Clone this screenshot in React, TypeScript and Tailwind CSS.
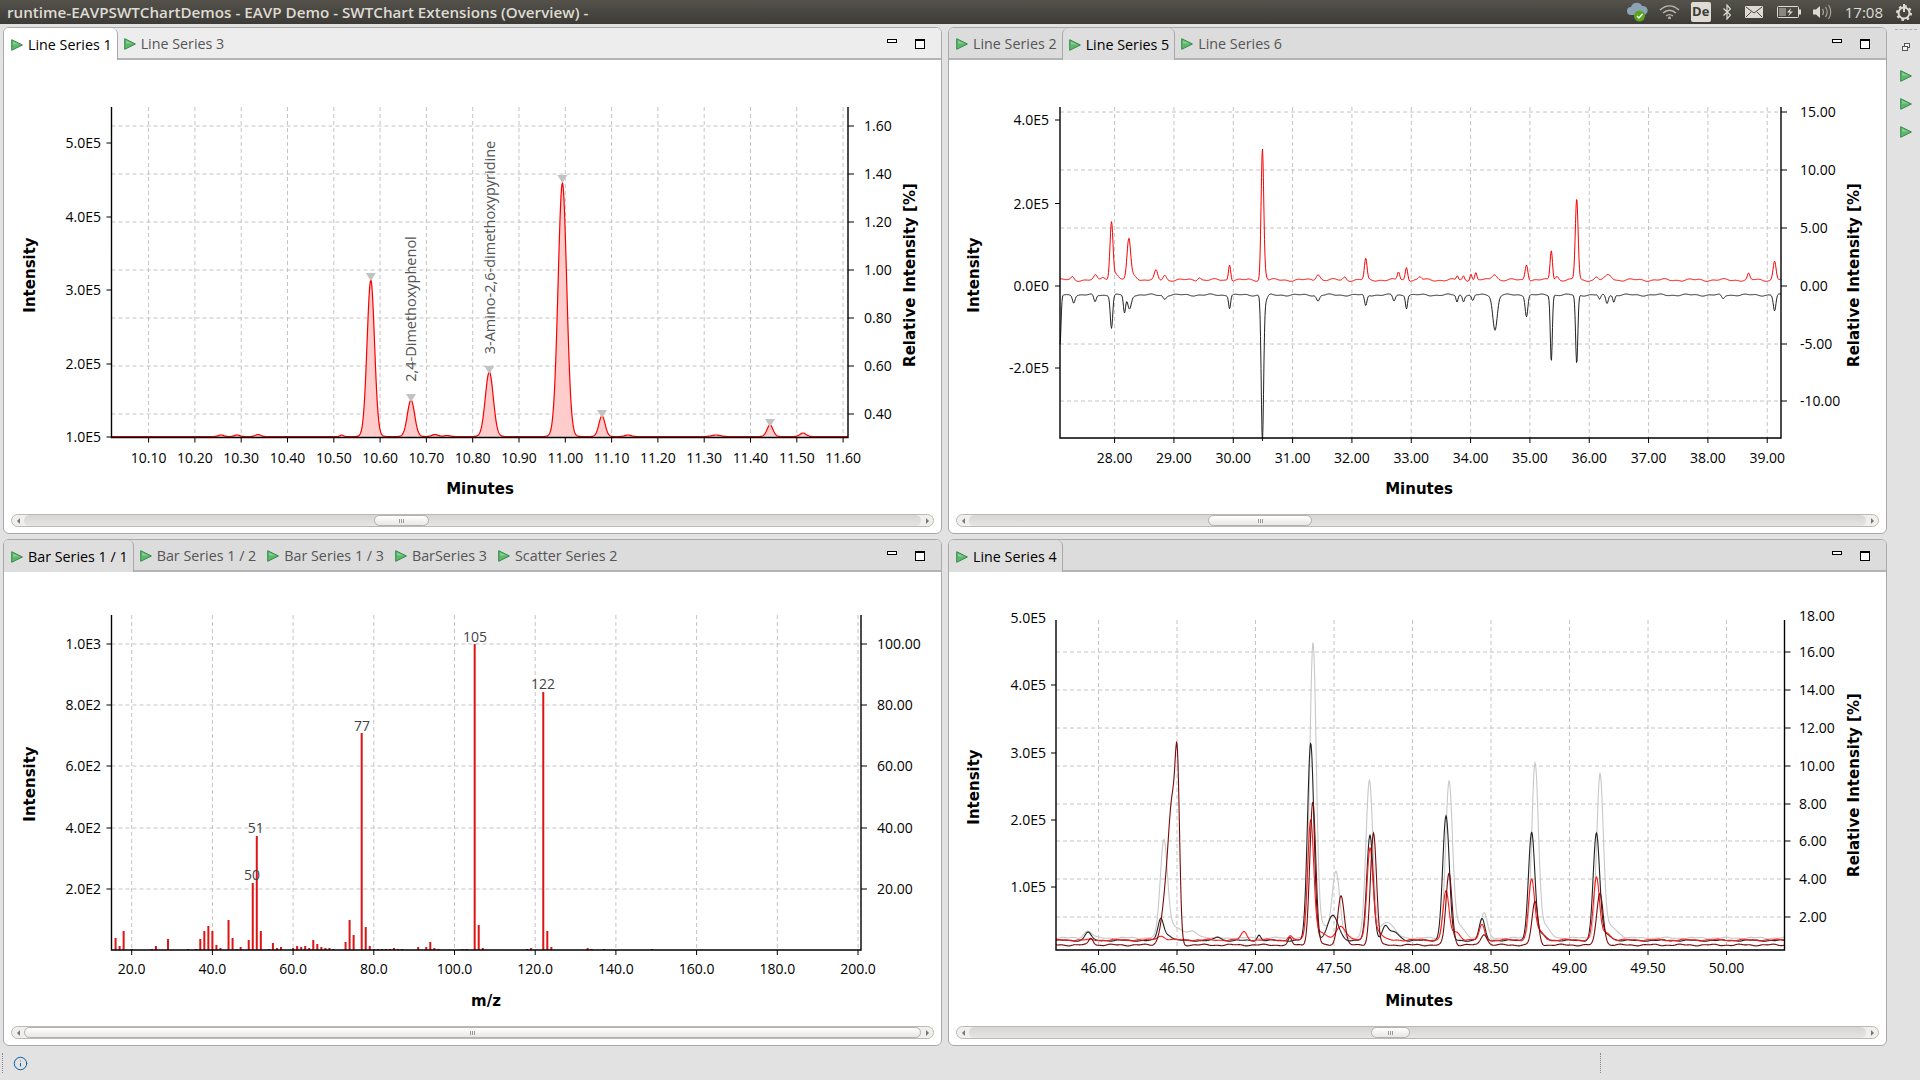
import type { ReactNode } from 'react';
import { Info } from 'lucide-react';

type Peak = [number, number, number];
type Tick = [number, string];

// x, y of the top of the peak, sigma - everything is in screen pixels
const trace = (x0: number, x1: number, base: number, peaks: Peak[], ripple = 0, phase = 0) => {
  const pts: string[] = [];
  for (let x = x0; x <= x1; x += 0.5) {
    let y = base;
    for (const [c, top, s] of peaks) {
      y -= (base - top) * Math.exp(-((x - c) * (x - c)) / (2 * s * s));
    }
    y += ripple * (Math.sin(x * 0.21 + phase) + 0.6 * Math.sin(x * 0.53 + phase * 2));
    pts.push(`${x},${y.toFixed(1)}`);
  }
  return pts;
};

const linePath = (pts: string[]) => 'M' + pts.join(' L');

const chart1Peaks: Peak[] = [
  [221, 435, 2.5], [237, 435, 2.5], [258, 434.5, 2.5], [341.7, 435, 1.5], [370.8, 280, 3.7], [411, 400, 3.6], [435, 434.5, 3],
  [447, 435.5, 3], [489.3, 372, 4], [562.4, 183, 4.3], [602, 416, 3.1], [628, 435, 3], [716, 435, 4], [770, 425, 3], [803, 433, 3],
];

const chart2Red: Peak[] = [
  [1072.5, 277, 1.5], [1095.4, 276, 1.6], [1103, 277, 2], [1111.5, 221, 1.5], [1116, 274, 2], [1128.8, 240, 1.8], [1134, 275, 3], [1156, 271, 1.6], [1164.7, 275, 1.6],
  [1199.3, 277, 1.6], [1229.6, 264, 1.1], [1262.4, 150, 1.3], [1265, 274, 1.5], [1318, 274, 2], [1344.7, 277, 1.5], [1365.7, 259, 1.3], [1398.5, 272, 1.2], [1406.5, 267, 1.2],
  [1420, 277, 1.5], [1457.3, 276, 1], [1463.5, 276, 1], [1470.9, 273, 1], [1475.8, 273, 1], [1494.4, 274, 2.5], [1526.5, 264, 1.4], [1551.3, 250, 1.2], [1556.9, 276, 1.5],
  [1576.7, 199, 1.4], [1596.5, 277, 1.5], [1608.8, 275, 3], [1748.6, 274, 1.2], [1774.6, 261, 1.5],
];

const chart2Black: Peak[] = [
  [1060, 345, 1], [1073.7, 302, 1.2], [1095, 302, 1.2], [1111.5, 328, 1.2], [1124.5, 313, 1.1], [1129.4, 309, 1.8], [1164.7, 299, 1.5], [1229.6, 308, 1],
  [1262.4, 438, 1.2], [1265, 302, 2], [1318, 301, 1.5], [1365.7, 306, 1.2], [1394, 301, 1.2], [1406.5, 308, 1], [1457, 302, 1], [1463.5, 301, 1], [1472.7, 301, 1.2],
  [1495, 330, 2.2], [1526.5, 316, 1.3], [1551.3, 361, 1], [1576.7, 364, 1.1], [1599.6, 300, 1.2], [1607, 303, 1.2], [1613.8, 302, 1], [1723, 299, 1.5], [1774.6, 311, 1.3],
];

const chart4Gray: Peak[] = [
  [1088, 931, 4], [1163.8, 847, 3.5], [1172, 925, 8], [1193, 932, 6], [1313, 647, 3.2], [1322, 925, 6], [1336, 873, 3.8], [1369.4, 782, 3.5], [1386.7, 922, 7],
  [1449, 785, 3.4], [1458, 925, 6], [1484, 913, 3.2], [1535, 768, 3.3], [1543, 925, 6], [1600, 778, 3.3], [1610, 926, 7],
];
const chart4Black: Peak[] = [
  [1088, 932, 3], [1160.7, 919, 2.8], [1168, 935, 4], [1218, 937, 3], [1259, 935, 1.8], [1310.7, 743, 3.2], [1333, 916, 5.5], [1370, 835, 3.2], [1385, 927, 3],
  [1394, 932, 5], [1446, 816, 3.3], [1482, 919, 2.8], [1531.6, 834, 3.2], [1540, 934, 5], [1596.4, 834, 3.2], [1606, 934, 5],
];
const chart4Red: Peak[] = [
  [1161, 936, 4], [1244, 932, 3], [1290, 936, 2], [1310.7, 820, 3], [1320, 932, 5], [1341, 926, 5], [1370, 848, 3], [1378, 932, 4], [1446, 892, 3], [1456, 932, 4],
  [1482, 925, 2.6], [1531.6, 880, 3], [1540, 932, 4], [1596.4, 878, 3], [1606, 932, 4],
];
const chart4DarkRed: Peak[] = [
  [1091, 938, 2.2], [1168, 880, 5], [1173, 845, 3.5], [1177.5, 805, 2.2], [1290, 938, 1.8], [1312.8, 802, 3], [1341, 895, 3.2], [1373.5, 833, 3], [1449, 873, 3],
  [1484, 934, 3], [1535, 902, 3], [1600, 893, 3.2],
];

// [m/z, top of the bar on screen]
const bars: [number, number][] = [
  [16, 938], [17, 946], [18, 931], [20, 949], [25, 949], [26, 946], [29, 939], [34, 949], [36, 949], [37, 939], [38, 931], [39, 926], [40, 931], [41, 945], [42, 948],
  [44, 920], [45, 938], [46, 949], [47, 947], [49, 940], [50, 883], [51, 836], [52, 931], [54, 949], [55, 943], [56, 948], [57, 947], [60, 948], [61, 946], [62, 947],
  [63, 946], [64, 948], [65, 940], [66, 944], [67, 947], [68, 948], [69, 948], [70, 949], [73, 942], [74, 920], [75, 935], [77, 733], [78, 927], [79, 946], [80, 949],
  [81, 949], [82, 949], [83, 949], [84, 949], [85, 948], [86, 949], [87, 949], [91, 947], [93, 947], [94, 942], [95, 948], [96, 949], [102, 949], [103, 949], [105, 644],
  [106, 925], [107, 948], [118, 949], [119, 948], [122, 692], [123, 931], [124, 947], [133, 948], [134, 949], [137, 949], [149, 949],
];

function PlayIcon() {
  return (
    <svg width="12" height="12" viewBox="0 0 12 12" className="shrink-0">
      <polygon points="0.7,0.7 11.4,6 0.7,11.3" fill="#5fb66d" stroke="#35894c" strokeWidth="1" />
      <polygon points="2,2.6 8.4,5.6 2,5.6" fill="#86cf8e" />
    </svg>
  );
}

function Tab({ label, active, focused, first }: { label: string; active?: boolean; focused?: boolean; first?: boolean }) {
  let cls = 'text-[#555]';
  if (active) {
    cls = `text-black border-r border-[#a9a9a9] rounded-tr-[6px] h-[32px] ${first ? '' : 'border-l rounded-tl-[6px]'} ${focused ? 'bg-white' : 'bg-[#dedede]'}`;
  }
  return (
    <div className={`flex items-center gap-[5px] pt-[2px] ${first ? 'pl-[7px]' : 'pl-[6px]'} pr-[5px] ${cls}`}>
      <PlayIcon />
      <span className="text-[14.3px] whitespace-nowrap">{label}</span>
    </div>
  );
}

function Scrollbar({ thumb }: { thumb: string }) {
  return (
    <div className="mx-[7px] mb-[6px] flex h-[13px] shrink-0 rounded-full border border-[#bcb9b4] bg-[#f0efed]">
      <div className="flex w-[12px] shrink-0 items-center justify-center">
        <div className="h-0 w-0 border-y-[3px] border-r-[3px] border-y-transparent border-r-[#777]" />
      </div>
      <div className="flex min-w-0 flex-1 rounded-full bg-gradient-to-b from-[#d6d5d2] to-[#e6e5e3]">
        <div className={`flex items-center justify-center gap-[1px] rounded-full border border-[#b5b2ad] bg-gradient-to-b from-white to-[#e8e7e5] ${thumb}`}>
          <div className="h-[4px] w-px bg-[#999]" />
          <div className="h-[4px] w-px bg-[#999]" />
          <div className="h-[4px] w-px bg-[#999]" />
        </div>
      </div>
      <div className="flex w-[12px] shrink-0 items-center justify-center">
        <div className="h-0 w-0 border-y-[3px] border-l-[3px] border-y-transparent border-l-[#777]" />
      </div>
    </div>
  );
}

function Panel({ tabs, activeTab, focused, thumb, children }: { tabs: string[]; activeTab: number; focused?: boolean; thumb: string; children: ReactNode }) {
  return (
    <div className="flex min-h-0 min-w-0 flex-col overflow-hidden rounded-[6px] border border-[#a9a9a9] bg-white">
      <div className={`flex h-[32px] shrink-0 border-b-2 border-[#b4b4b4] ${focused ? 'bg-[#ededed]' : 'bg-[#dcdcdc]'}`}>
        {tabs.map((t, i) => (
          <Tab key={t} label={t} active={i === activeTab} focused={focused} first={i === 0} />
        ))}
        <div className="ml-auto flex items-start gap-[18px] pt-[11px] pr-[16px]">
          <div className="h-[4px] w-[10px] border border-black bg-white" />
          <div className="h-[10px] w-[10px] border border-t-2 border-black bg-white" />
        </div>
      </div>
      {children}
      <Scrollbar thumb={thumb} />
    </div>
  );
}

interface ChartProps {
  view: string;
  l: number;
  r: number;
  t: number;
  b: number;
  xTicks: Tick[];
  leftTicks: Tick[];
  rightTicks: Tick[];
  grid: number[];
  leftLabelEnd: number;
  rightLabelStart: number;
  xTitle: [string, number, number];
  yTitleX: number;
  yTitleY: number;
  rightTitle?: [number, number];
  xLabelY: number;
  children?: ReactNode;
}

function Chart(p: ChartProps) {
  const title = "fill-black text-[15px] font-bold font-['DejaVu_Sans',sans-serif]";
  return (
    <svg viewBox={p.view} className="block h-[454px] w-[937px] shrink-0">
      {p.xTicks.map(([x]) => (
        <line key={x} x1={x} x2={x} y1={p.t} y2={p.b} stroke="#c4c4c4" strokeDasharray="4 3" />
      ))}
      {p.grid.map((y) => (
        <line key={y} x1={p.l} x2={p.r} y1={y} y2={y} stroke="#c4c4c4" strokeDasharray="4 3" />
      ))}
      {p.children}
      <path d={`M${p.l} ${p.t}V${p.b}H${p.r}V${p.t}`} fill="none" stroke="#000" strokeWidth="1.4" />
      {p.xTicks.map(([x, label]) => (
        <g key={label}>
          <line x1={x} x2={x} y1={p.b} y2={p.b + 5} stroke="#000" />
          <text x={x} y={p.xLabelY} textAnchor="middle" dominantBaseline="central" className="fill-black text-[14px]">{label}</text>
        </g>
      ))}
      {p.leftTicks.map(([y, label]) => (
        <g key={label}>
          {y >= p.t && <line x1={p.l - 5} x2={p.l} y1={y} y2={y} stroke="#000" />}
          <text x={p.leftLabelEnd} y={y - 0.5} textAnchor="end" dominantBaseline="central" className="fill-black text-[14px]">{label}</text>
        </g>
      ))}
      {p.rightTicks.map(([y, label]) => (
        <g key={label}>
          {y >= p.t && <line x1={p.r} x2={p.r + 6} y1={y} y2={y} stroke="#000" />}
          <text x={p.rightLabelStart} y={y - 0.5} dominantBaseline="central" className="fill-black text-[14px]">{label}</text>
        </g>
      ))}
      <text x={p.xTitle[1]} y={p.xTitle[2]} textAnchor="middle" dominantBaseline="central" className={title}>{p.xTitle[0]}</text>
      <text x={p.yTitleX} y={p.yTitleY} transform={`rotate(-90 ${p.yTitleX} ${p.yTitleY})`} textAnchor="middle" dominantBaseline="central" className={title}>Intensity</text>
      {p.rightTitle && (
        <text x={p.rightTitle[0]} y={p.rightTitle[1]} transform={`rotate(-90 ${p.rightTitle[0]} ${p.rightTitle[1]})`} textAnchor="middle" dominantBaseline="central" className={title}>Relative Intensity [%]</text>
      )}
    </svg>
  );
}

function Marker({ x, y }: { x: number; y: number }) {
  return <polygon points={`${x - 5},${y - 8} ${x + 5},${y - 8} ${x},${y}`} fill="#c2c2c2" />;
}

function Rotated({ x, y, children }: { x: number; y: number; children: string }) {
  return (
    <text x={x} y={y} transform={`rotate(-90 ${x} ${y})`} textAnchor="middle" dominantBaseline="central" className="fill-[#555] text-[14.5px]">{children}</text>
  );
}

function PeakLabel({ x, y, children }: { x: number; y: number; children: string }) {
  return <text x={x} y={y} textAnchor="middle" dominantBaseline="central" className="fill-[#444] text-[14px]">{children}</text>;
}

function TrayIcons() {
  return (
    <div className="ml-auto flex items-center">
      <svg width="22" height="20" viewBox="0 0 22 20">
        <path d="M5 13a4 4 0 0 1 0-8 6 6 0 0 1 11-1 4.5 4.5 0 0 1 2 9z" fill="#8ba3b5" />
        <circle cx="13.5" cy="14" r="5.5" fill="#5aa51e" />
        <path d="M11 14l2 2 3.5-4" fill="none" stroke="#fff" strokeWidth="1.4" />
      </svg>
      <svg width="21" height="14" viewBox="0 0 21 14" className="ml-[11px]" fill="none" stroke="#bcb8ae" strokeWidth="1.4">
        <path d="M1 5c6-5.5 13-5.5 19 0M4 8c4-3.5 9-3.5 13 0M7 11c2.5-2 4.5-2 7 0" />
        <circle cx="10.5" cy="13" r="0.7" fill="#bcb8ae" />
      </svg>
      <div className="ml-[11px] flex h-[20px] w-[20px] items-center justify-center rounded-[2px] bg-[#dfdbd2] text-[13px] font-bold text-[#3c3b37]">De</div>
      <svg width="8" height="16" viewBox="0 0 8 16" className="ml-[12px]" fill="none" stroke="#dfdbd2" strokeWidth="1.2">
        <path d="M0.5 4.5l7 6.5-3.5 4V1l3.5 4-7 6.5" />
      </svg>
      <svg width="18" height="12" viewBox="0 0 18 12" className="ml-[14px]">
        <rect width="18" height="12" rx="1" fill="#dfdbd2" />
        <path d="M1 1l8 6 8-6M1 11l5.5-5.5M17 11l-5.5-5.5" fill="none" stroke="#4a4843" strokeWidth="1" />
      </svg>
      <svg width="24" height="12" viewBox="0 0 24 12" className="ml-[14px]">
        <rect x="0.5" y="0.5" width="21" height="11" rx="1" fill="none" stroke="#dfdbd2" />
        <rect x="2" y="2" width="7" height="8" fill="#8a877f" />
        <rect x="22" y="3.5" width="2" height="5" fill="#dfdbd2" />
        <path d="M14 2l-4 4.5h3l-2 4 5-5h-3z" fill="#dfdbd2" />
      </svg>
      <svg width="19" height="16" viewBox="0 0 19 16" className="ml-[12px]" fill="none" stroke="#a9a59c" strokeWidth="1.2">
        <path d="M0 5.5h3l4-3.5v12l-4-3.5H0z" fill="#dfdbd2" stroke="none" />
        <path d="M9.5 5c1.2 1.8 1.2 4.2 0 6M12.5 3c2 3 2 7 0 10M15.5 1c3 4 3 10 0 14" />
      </svg>
      <span className="ml-[13px] text-[15px] text-[#dfdbd2]">17:08</span>
      <svg width="18" height="18" viewBox="0 0 18 18" className="ml-[12px] mr-[7px]" fill="none" stroke="#dfdbd2">
        <circle cx="9" cy="10" r="5.5" strokeWidth="2" />
        <circle cx="9" cy="10" r="7" strokeWidth="2" strokeDasharray="2.5 3" />
        <path d="M9 1v8" strokeWidth="2" />
      </svg>
    </div>
  );
}

const ticks1: Tick[] = Array.from({ length: 16 }, (_, i) => [148.6 + i * 46.3, (10.1 + i * 0.1).toFixed(2)]);
const ticks2: Tick[] = Array.from({ length: 12 }, (_, i) => [1114.6 + i * 59.33, `${28 + i}.00`]);
const ticks3: Tick[] = Array.from({ length: 10 }, (_, i) => [131.7 + i * 80.7, `${20 + i * 20}.0`]);
const ticks4: Tick[] = Array.from({ length: 9 }, (_, i) => [1098.5 + i * 78.5, (46 + i * 0.5).toFixed(2)]);

const chart1Pts = trace(112, 848, 436.5, chart1Peaks);

export default function App() {
  return (
    <div className="flex h-screen w-screen flex-col overflow-hidden bg-[#e2e2e2] font-['Open_Sans',sans-serif]">
      <div className="flex h-[24px] shrink-0 items-center bg-gradient-to-b from-[#55524b] to-[#3c3b37] pl-[7px]">
        <span className="text-[15.2px] font-semibold whitespace-nowrap text-[#dfdbd2]">runtime-EAVPSWTChartDemos - EAVP Demo - SWTChart Extensions (Overview) -</span>
        <TrayIcons />
      </div>

      <div className="flex min-h-0 flex-1 pt-[3px]">
        <div className="grid w-[1887px] shrink-0 grid-cols-2 grid-rows-[507px_507px] gap-x-[6px] gap-y-[5px] pl-[3px]">
          <Panel tabs={['Line Series 1', 'Line Series 3']} activeTab={0} focused thumb="ml-[350px] w-[55px]">
            <Chart
              view="4 60 937 454"
              l={111.5} r={848} t={107} b={437.5}
              xTicks={ticks1}
              leftTicks={[[143, '5.0E5'], [217, '4.0E5'], [290, '3.0E5'], [364, '2.0E5'], [437, '1.0E5']]}
              rightTicks={[[126, '1.60'], [174, '1.40'], [222, '1.20'], [270, '1.00'], [318, '0.80'], [366, '0.60'], [414, '0.40']]}
              grid={[126, 174, 222, 270, 318, 366, 414]}
              leftLabelEnd={101}
              rightLabelStart={864}
              xTitle={['Minutes', 480, 489]}
              yTitleX={29.5}
              yTitleY={275}
              rightTitle={[910, 275]}
              xLabelY={457}
            >
              <path d={`M112,437 L${chart1Pts.join(' L')} L848,437 Z`} fill="#ffcccc" />
              <path d={linePath(chart1Pts)} fill="none" stroke="#f80000" strokeWidth="1.2" />
              <Marker x={370.8} y={281} />
              <Marker x={411} y={402} />
              <Marker x={489.3} y={374} />
              <Marker x={562.4} y={183} />
              <Marker x={602} y={418} />
              <Marker x={770} y={427} />
              <Rotated x={410} y={309}>2,4-Dimethoxyphenol</Rotated>
              <Rotated x={489} y={247.5}>3-Amino-2,6-dimethoxypyridine</Rotated>
            </Chart>
          </Panel>

          <Panel tabs={['Line Series 2', 'Line Series 5', 'Line Series 6']} activeTab={1} thumb="ml-[239px] w-[104px]">
            <Chart
              view="949 60 937 454"
              l={1060} r={1781} t={107} b={438}
              xTicks={ticks2}
              leftTicks={[[120, '4.0E5'], [203.5, '2.0E5'], [286, '0.0E0'], [368, '-2.0E5']]}
              rightTicks={[[112, '15.00'], [170, '10.00'], [228, '5.00'], [286, '0.00'], [344, '-5.00'], [401, '-10.00']]}
              grid={[112, 170, 228, 344, 401]}
              leftLabelEnd={1049}
              rightLabelStart={1800}
              xTitle={['Minutes', 1419, 489]}
              yTitleX={973.5}
              yTitleY={275}
              rightTitle={[1854, 275]}
              xLabelY={457}
            >
              <path d={linePath(trace(1060, 1781, 280, chart2Red, 0.9, 1))} fill="none" stroke="#f80000" strokeWidth="1" />
              <path d={linePath(trace(1060, 1781, 295, chart2Black, 0.7, 2))} fill="none" stroke="#222" strokeWidth="1" />
            </Chart>
          </Panel>

          <Panel tabs={['Bar Series 1 / 1', 'Bar Series 1 / 2', 'Bar Series 1 / 3', 'BarSeries 3', 'Scatter Series 2']} activeTab={0} thumb="ml-0 w-full">
            <Chart
              view="4 572 937 454"
              l={111.5} r={861} t={615} b={950}
              xTicks={ticks3}
              leftTicks={[[644, '1.0E3'], [705, '8.0E2'], [766, '6.0E2'], [828, '4.0E2'], [889, '2.0E2']]}
              rightTicks={[[644, '100.00'], [705, '80.00'], [766, '60.00'], [828, '40.00'], [889, '20.00']]}
              grid={[644, 705, 766, 828, 889]}
              leftLabelEnd={101}
              rightLabelStart={877}
              xTitle={['m/z', 486, 1001]}
              yTitleX={29.5}
              yTitleY={784}
              xLabelY={968.5}
            >
              {bars.map(([mz, top]) => (
                <rect key={mz} x={131.7 + (mz - 20) * 4.035 - 1} y={top} width="2" height={950 - top} fill="#dd1515" />
              ))}
              <PeakLabel x={475} y={636}>105</PeakLabel>
              <PeakLabel x={543} y={683.5}>122</PeakLabel>
              <PeakLabel x={362} y={725}>77</PeakLabel>
              <PeakLabel x={255.7} y={827.5}>51</PeakLabel>
              <PeakLabel x={252} y={874.5}>50</PeakLabel>
            </Chart>
          </Panel>

          <Panel tabs={['Line Series 4']} activeTab={0} thumb="ml-[402px] w-[39px]">
            <Chart
              view="949 572 937 454"
              l={1056} r={1784.5} t={620} b={950}
              xTicks={ticks4}
              leftTicks={[[618, '5.0E5'], [685, '4.0E5'], [753, '3.0E5'], [820, '2.0E5'], [887, '1.0E5']]}
              rightTicks={[[616, '18.00'], [652, '16.00'], [690, '14.00'], [728, '12.00'], [766, '10.00'], [804, '8.00'], [841, '6.00'], [879, '4.00'], [917, '2.00']]}
              grid={[652, 690, 728, 766, 804, 841, 879, 917]}
              leftLabelEnd={1046}
              rightLabelStart={1799}
              xTitle={['Minutes', 1419, 1000.5]}
              yTitleX={973.5}
              yTitleY={787}
              rightTitle={[1854, 785]}
              xLabelY={967}
            >
              <path d={linePath(trace(1056, 1784, 938, chart4Gray, 0.6, 0.5))} fill="none" stroke="#c8c8c8" strokeWidth="1.1" />
              <path d={linePath(trace(1056, 1784, 940.5, chart4Black, 0.5, 1.5))} fill="none" stroke="#222" strokeWidth="1.1" />
              <path d={linePath(trace(1056, 1784, 940, chart4Red, 0.6, 2.5))} fill="none" stroke="#ff1818" strokeWidth="1.1" />
              <path d={linePath(trace(1056, 1784, 945, chart4DarkRed, 0.6, 3.5))} fill="none" stroke="#7a0a0a" strokeWidth="1.1" />
            </Chart>
          </Panel>
        </div>

        <div className="flex flex-1 flex-col items-center pl-[4px]">
          <div className="mt-[2px] h-0 w-[22px] border-t border-dashed border-[#b0b0b0]" />
          <svg width="8" height="8" viewBox="0 0 8 8" className="mt-[13px]" fill="#f4f4f4" stroke="#555">
            <rect x="2.5" y="0.5" width="5" height="4" />
            <rect x="0.5" y="3.5" width="5" height="4" />
          </svg>
          <div className="mt-[19px] flex flex-col gap-[16px]">
            <PlayIcon />
            <PlayIcon />
            <PlayIcon />
          </div>
        </div>
      </div>

      <div className="flex h-[34px] shrink-0 items-center bg-[#e2e2e2]">
        <div className="ml-[2px] h-[20px] border-l border-dotted border-[#888]" />
        <Info size={15} strokeWidth={1.6} className="ml-[10px] text-[#0d5fa8]" />
        <div className="ml-[1572px] h-[20px] border-l border-dotted border-[#888]" />
      </div>
    </div>
  );
}
